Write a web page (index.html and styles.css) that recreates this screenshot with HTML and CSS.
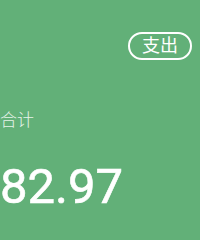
FILE: index.html
```html
<!DOCTYPE html>
<html>
<head>
<meta charset="utf-8">
<link rel="stylesheet" href="styles.css">
</head>
<body>
<div class="card">
  <div class="top">
    <span class="pill">支出</span>
  </div>
  <div class="label">合计</div>
  <div class="amount">82.97</div>
</div>
</body>
</html>
```

FILE: styles.css
```css
html, body {
  margin: 0;
  padding: 0;
  background: #62b078;
}
.card {
  width: 200px;
  height: 240px;
  box-sizing: border-box;
  padding-top: 32px;
  font-family: Roboto, "Noto Sans CJK SC", sans-serif;
  color: #fff;
  overflow: hidden;
}
.top {
  display: flex;
  justify-content: flex-end;
  padding-right: 8px;
}
.pill {
  box-sizing: border-box;
  width: 64px;
  height: 28px;
  border: 2px solid #fff;
  border-radius: 14px;
  display: flex;
  align-items: center;
  justify-content: center;
  font-size: 18px;
  line-height: 1;
  font-weight: 400;
}
.label {
  margin-top: 50px;
  font-size: 17px;
  line-height: 20px;
  color: #e6f3ea;
  font-weight: 300;
}
.amount {
  margin-top: 29px;
  font-size: 49px;
  line-height: 56px;
  font-weight: 400;
  -webkit-text-stroke: 0.6px #fff;
  margin-left: 0;
}
```
